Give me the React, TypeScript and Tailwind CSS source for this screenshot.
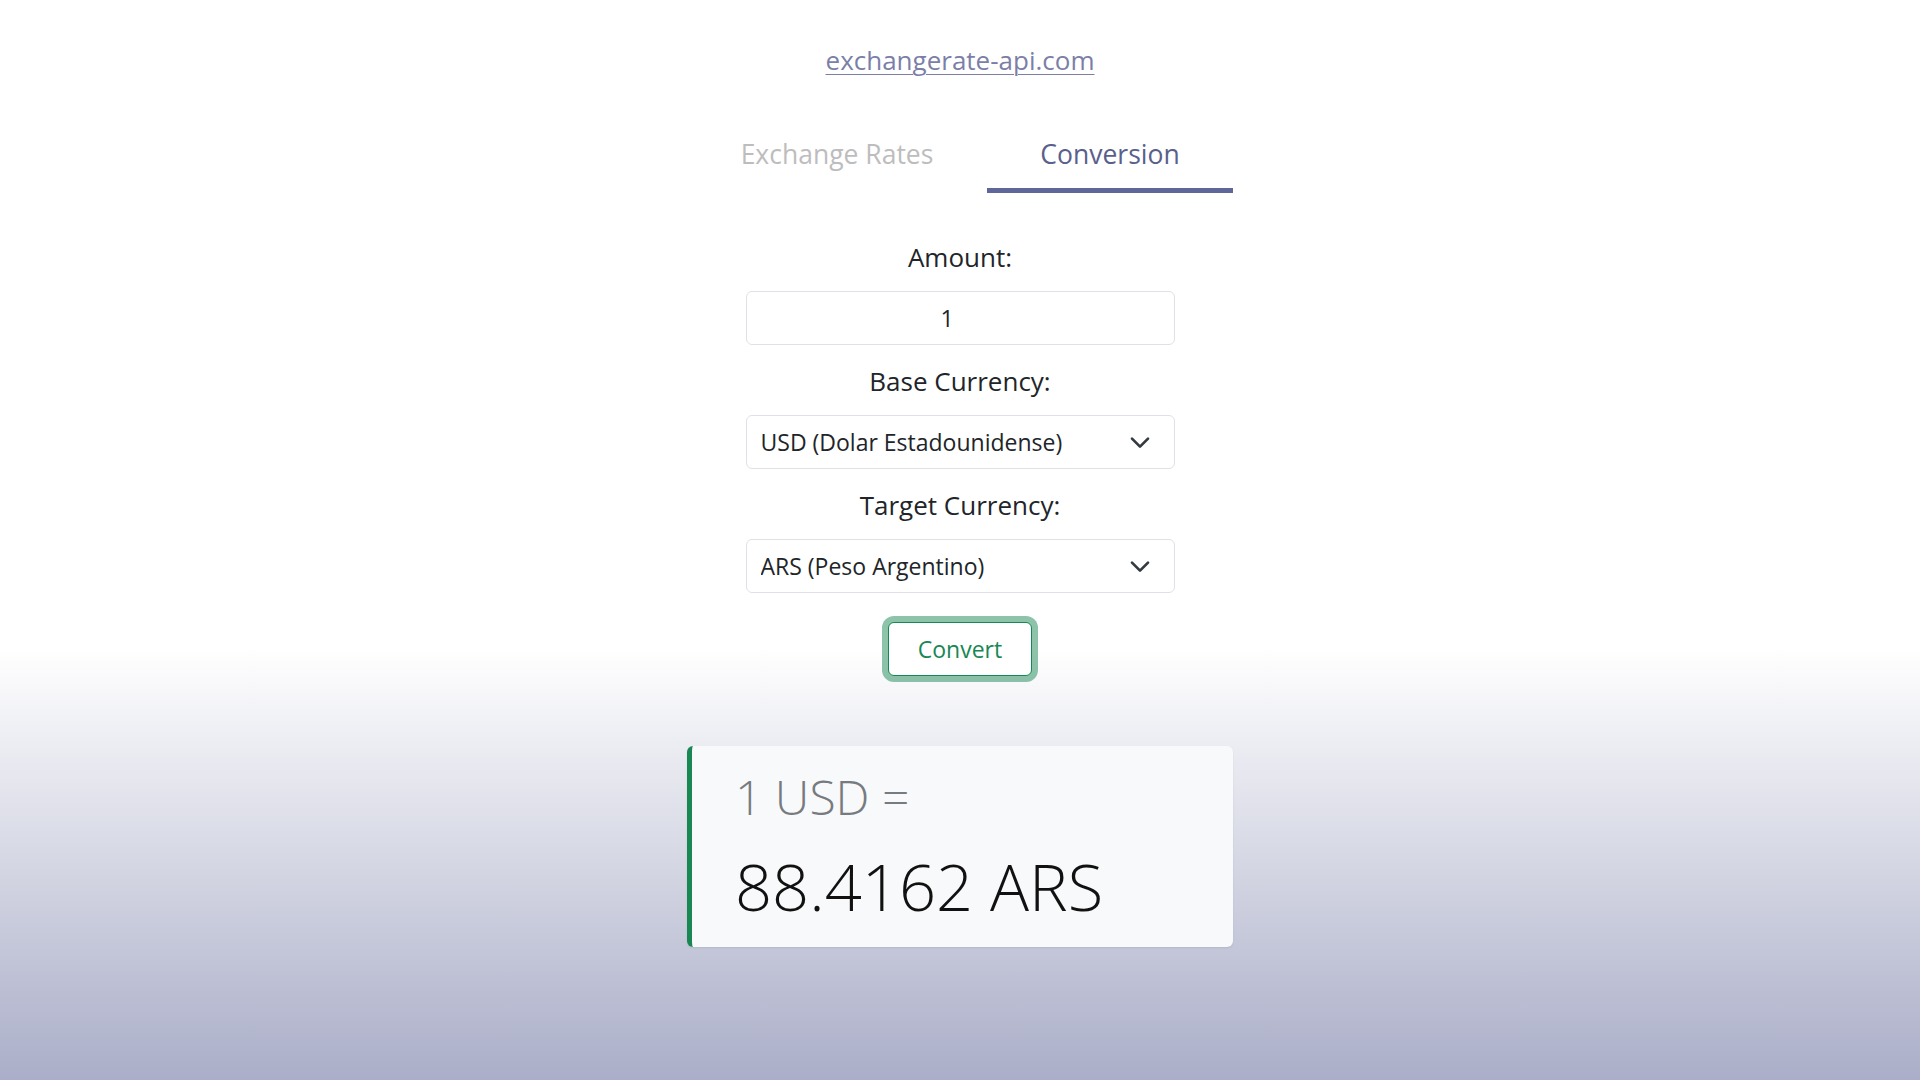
import { useState } from 'react';

const font = { fontFamily: '"Open Sans", "Noto Sans", Arial, sans-serif' };

function Chevron() {
  return (
    <svg width="22" height="16" viewBox="0 0 16 12" className="pointer-events-none absolute right-[24px] top-1/2 -translate-y-1/2">
      <path d="M2 3.5l6 6 6-6" fill="none" stroke="#343a40" strokeWidth="2" strokeLinecap="round" strokeLinejoin="round" />
    </svg>
  );
}

export default function App() {
  const [tab, setTab] = useState<'rates' | 'conversion'>('conversion');
  const [amount, setAmount] = useState('1');

  const label = 'h-[36px] text-center text-[26px] leading-[36px] text-[#212529]';
  const field =
    'h-[54px] w-full rounded-[6px] border border-[#dee2e6] bg-white text-[23px] text-[#212529] outline-none';

  return (
    <div
      className="min-h-screen bg-[linear-gradient(to_bottom,#ffffff_60%,#aaaec8_100%)] pt-[42px]"
      style={font}
    >
      <div className="flex justify-center">
        <a href="#" className="h-[36px] text-[26px] leading-[36px] text-[#7b7fa8] underline underline-offset-[4px] decoration-1">
          exchangerate-api.com
        </a>
      </div>

      <div className="mx-auto mt-[36px] flex w-[546px]">
        <button
          onClick={() => setTab('rates')}
          className={`w-[300px] border-b-[5px] pt-[22px] pb-[16px] text-[26.5px] leading-[36px] ${
            tab === 'rates' ? 'border-[#5f6699] text-[#5a5f8c]' : 'border-transparent text-[#bdbdbd]'
          }`}
        >
          Exchange Rates
        </button>
        <button
          onClick={() => setTab('conversion')}
          className={`w-[246px] border-b-[5px] pt-[22px] pb-[16px] text-[26.5px] leading-[36px] ${
            tab === 'conversion' ? 'border-[#5f6699] text-[#5a5f8c]' : 'border-transparent text-[#bdbdbd]'
          }`}
        >
          Conversion
        </button>
      </div>

      <div className="mx-auto mt-[46px] flex w-[429px] flex-col">
        <div className={label}>Amount:</div>
        <input
          value={amount}
          onChange={(e) => setAmount(e.target.value)}
          className={`${field} mt-[16px] pr-[26px] text-center`}
        />

        <div className={`${label} mt-[18px]`}>Base Currency:</div>
        <div className="relative mt-[16px]">
          <select defaultValue="USD" className={`${field} appearance-none pl-[14px]`}>
            <option value="USD">USD (Dolar Estadounidense)</option>
            <option value="ARS">ARS (Peso Argentino)</option>
            <option value="EUR">EUR (Euro)</option>
          </select>
          <Chevron />
        </div>

        <div className={`${label} mt-[18px]`}>Target Currency:</div>
        <div className="relative mt-[16px]">
          <select defaultValue="ARS" className={`${field} appearance-none pl-[14px]`}>
            <option value="USD">USD (Dolar Estadounidense)</option>
            <option value="ARS">ARS (Peso Argentino)</option>
            <option value="EUR">EUR (Euro)</option>
          </select>
          <Chevron />
        </div>

        <div className="mt-[29px] flex justify-center">
          <button className="h-[54px] w-[144px] rounded-[6px] border border-[#198754] bg-white text-[23px] text-[#198754] shadow-[0_0_0_6px_rgba(25,135,84,0.5)]">
            Convert
          </button>
        </div>
      </div>

      <div className="mx-auto mt-[70px] w-[546px] rounded-[6px] border-l-[5px] border-[#198754] bg-[#f8f9fa] pt-[21px] pb-[21px] pl-[43px] shadow-[0_1px_2px_rgba(0,0,0,0.08)]">
        <div className="h-[60px] text-[48px] font-light leading-[60px] text-[#777b80]">1 USD =</div>
        <div className="mt-[19px] h-[80px] text-[65px] font-light leading-[80px] text-[#111]">88.4162 ARS</div>
      </div>
    </div>
  );
}
